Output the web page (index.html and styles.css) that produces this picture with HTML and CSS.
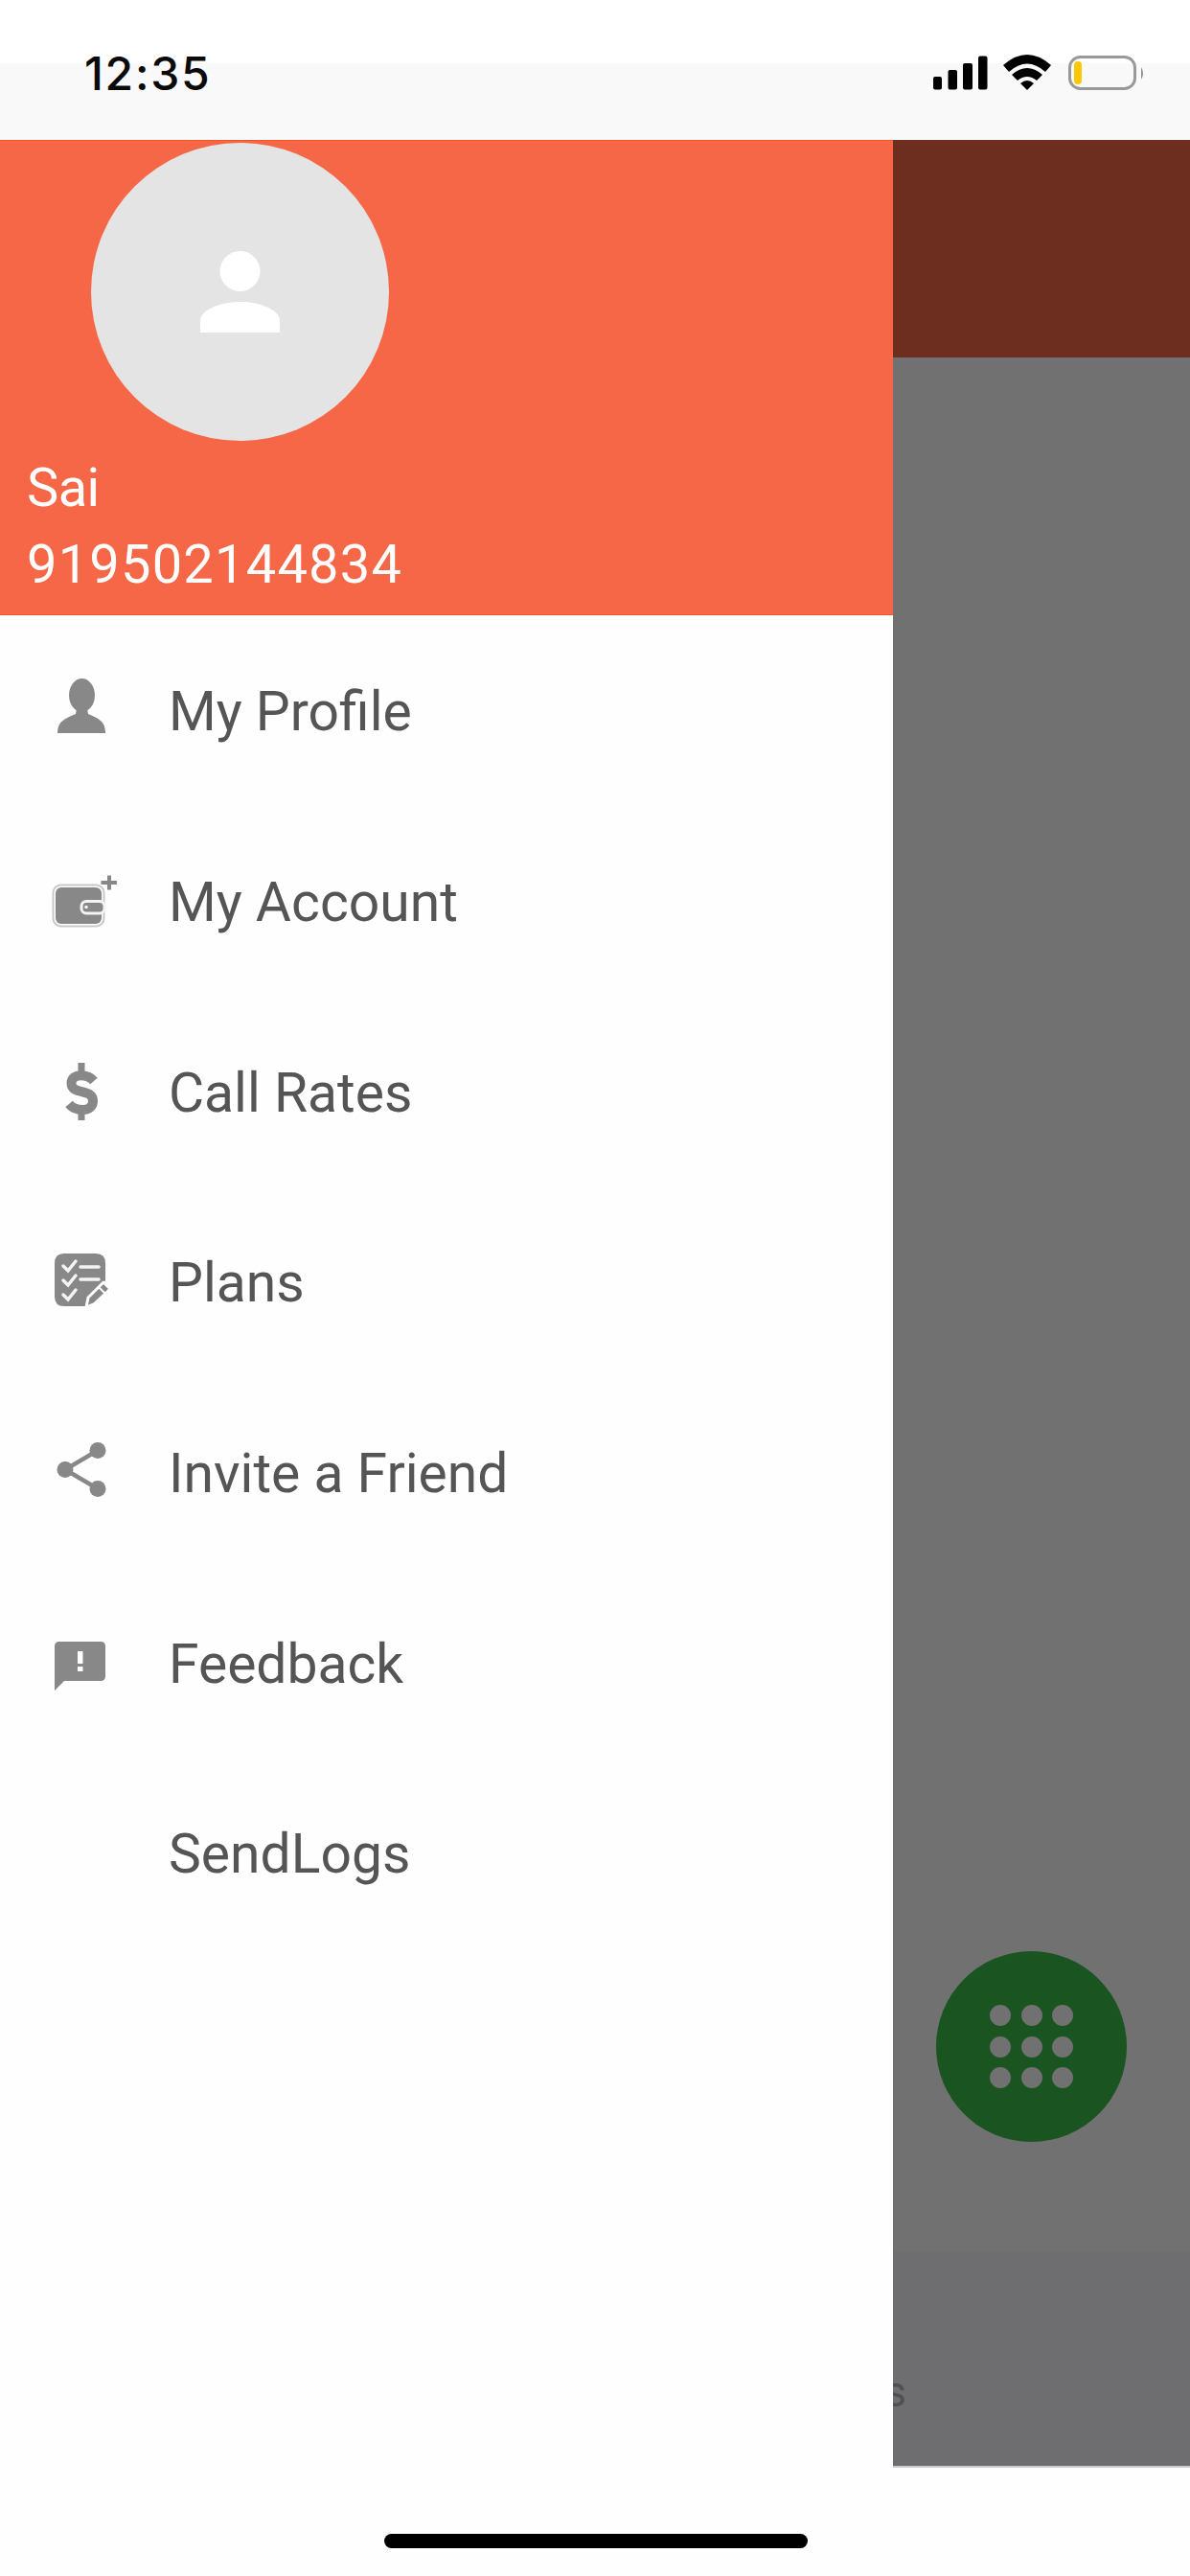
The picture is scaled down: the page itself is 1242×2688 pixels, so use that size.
FILE: index.html
```html
<!DOCTYPE html>
<html lang="en">
<head>
<meta charset="utf-8">
<title>Menu</title>
<link rel="stylesheet" href="styles.css">
</head>
<body>
<div class="phone">
  <header class="status">
    <span class="time">12:35</span>
    <svg class="status-icons" viewBox="960 50 240 50" width="240" height="50" aria-hidden="true">
      <rect x="974" y="80" width="9" height="13.5" rx="2"/>
      <rect x="989.5" y="73" width="9.5" height="20.5" rx="2"/>
      <rect x="1005" y="66" width="10" height="27.5" rx="2"/>
      <rect x="1021" y="58.5" width="9.5" height="35" rx="2"/>
      <path d="M1047 68 Q1072 46 1097 68 L1091 75 Q1072 58 1053 75 Z"/>
      <path d="M1056 78 Q1072 64 1088 78 L1082 84 Q1072 76 1062 84 Z"/>
      <path d="M1065 87 Q1072 81 1079 87 L1072 94 Z"/>
      <rect class="batt-case" x="1116.5" y="59.5" width="68" height="33" rx="11"/>
      <rect class="batt-level" x="1121" y="64" width="8" height="24" rx="4"/>
      <path class="batt-nub" d="M1191 70 Q1195 76.500 1191 83 Z"/>
    </svg>
  </header>

  <main class="body">
    <nav class="drawer">
      <section class="profile">
        <div class="avatar">
          <svg viewBox="0 0 311 311" width="311" height="311" aria-hidden="true">
            <circle cx="155.500" cy="134" r="21"/>
            <path d="M114 198 V185 C114 176 132 166 155.500 166 C179 166 197 176 197 185 V198 Z"/>
          </svg>
        </div>
        <div class="profile-line profile-name">Sai</div>
        <div class="profile-line profile-phone">919502144834</div>
      </section>
      <ul class="menu">
        <li class="item">
          <svg class="icon" viewBox="30 686 110 110" aria-hidden="true">
            <ellipse cx="85.500" cy="725.500" rx="13.500" ry="17.500"/>
            <path d="M60 765 C60 753 67 750 79 745 L80 739 L91 739 L92 745 C104 750 110 753 110 765 Z"/>
          </svg>
          <span class="label">My Profile</span>
        </li>
        <li class="item">
          <svg class="icon" viewBox="30 885 110 110" aria-hidden="true">
            <rect class="wallet-edge" x="55.500" y="923.500" width="53" height="43" rx="8"/>
            <rect x="58" y="926" width="48" height="38" rx="6"/>
            <rect class="wallet-clasp" x="85" y="940.500" width="24" height="12.500" rx="5"/>
            <circle class="wallet-dot" cx="90" cy="946.500" r="1.800"/>
            <path class="wallet-plus" d="M114 913.500 V928.500 M105.500 921 H122"/>
          </svg>
          <span class="label">My Account</span>
        </li>
        <li class="item">
          <svg class="icon" viewBox="30 1083 110 110" aria-hidden="true">
            <path class="dollar" d="M98 1127 C92 1120 75 1118 74.500 1129 C74 1142 97 1134 97 1148 C97 1160 79 1159 72 1151"/>
            <path class="dollar-bar" d="M85 1108 V1118 M85 1158 V1168"/>
          </svg>
          <span class="label">Call Rates</span>
        </li>
        <li class="item">
          <svg class="icon" viewBox="30 1282 110 110" aria-hidden="true">
            <path d="M67 1308 H100 Q110 1308 110 1318 V1336 L92 1363 H67 Q57 1363 57 1353 V1318 Q57 1308 67 1308 Z"/>
            <path class="plans-mark" d="M66 1321 L71 1326 L79 1316 M66 1336 L71 1341 L79 1331 M66 1351 L71 1356 L79 1346"/>
            <path class="plans-mark" d="M84 1322 H103 M84 1335 H103"/>
            <path class="plans-pencil" d="M108 1338 L115 1345 L98 1361 L90 1364 L92 1354 Z"/>
            <path class="plans-tip" d="M103 1343 L110 1350"/>
          </svg>
          <span class="label">Plans</span>
        </li>
        <li class="item">
          <svg class="icon" viewBox="30 1481 110 110" aria-hidden="true">
            <circle cx="102" cy="1513.500" r="8.500"/>
            <circle cx="68" cy="1533.500" r="8.500"/>
            <circle cx="102" cy="1553.500" r="8.500"/>
            <path class="share-line" d="M102 1513.500 L68 1533.500 L102 1553.500"/>
          </svg>
          <span class="label">Invite a Friend</span>
        </li>
        <li class="item">
          <svg class="icon" viewBox="30 1679 110 110" aria-hidden="true">
            <path d="M62 1712 H105 Q110 1712 110 1717 V1748 Q110 1753 105 1753 H67 L57 1763 V1717 Q57 1712 62 1712 Z"/>
            <rect class="feedback-mark" x="81" y="1722" width="5.500" height="13"/>
            <rect class="feedback-mark" x="81" y="1738" width="5.500" height="5"/>
          </svg>
          <span class="label">Feedback</span>
        </li>
        <li class="item">
          <span class="icon"></span>
          <span class="label">SendLogs</span>
        </li>
      </ul>
    </nav>

    <aside class="backdrop">
      <div class="backdrop-bar"></div>
      <div class="backdrop-list"></div>
      <div class="backdrop-tabs"><span class="clipped">s</span></div>
    </aside>
  </main>

  <button class="fab" type="button" aria-label="Dial pad">
    <span class="dots">
      <i></i><i></i><i></i><i></i><i></i><i></i><i></i><i></i><i></i>
    </span>
  </button>
  <div class="home-indicator"></div>
</div>
</body>
</html>
```

FILE: styles.css
```css
* { box-sizing: border-box; }

html, body {
  margin: 0;
  padding: 0;
  background: #fefefe;
}

.phone {
  position: relative;
  width: 1242px;
  height: 2688px;
  display: flex;
  flex-direction: column;
  overflow: hidden;
  font-family: Roboto, "Liberation Sans", sans-serif;
  background: #fefefe;
}

/* status bar */
.status {
  flex: none;
  height: 146px;
  padding: 52px 0 0 88px;
  display: flex;
  justify-content: space-between;
  align-items: flex-start;
  background: linear-gradient(#ffffff 66px, #f9f9f9 66px);
}

.time {
  font-family: Inter, Roboto, sans-serif;
  font-size: 48px;
  font-weight: 500;
  line-height: 50px;
  letter-spacing: 1.7px;
  color: #0a0a0a;
}

.status-icons {
  margin: -2px 42px 0 0;
  fill: #000;
}

.batt-case { fill: none; stroke: #999; stroke-width: 3; }
.batt-level { fill: #fdc800; }
.batt-nub { fill: #8e8e8e; }

/* layout */
.body {
  flex: 1;
  display: flex;
  align-items: flex-start;
}

.drawer {
  flex: none;
  width: 932px;
}

/* profile header */
.profile {
  height: 496px;
  padding: 2px 0 0 28px;
  color: #fff;
  background: #f66747;
  border-top: 1px solid #f9541f;
  border-bottom: 1px solid #f9541f;
}

.avatar {
  width: 311px;
  height: 311px;
  margin: 0 0 9px 67px;
  border-radius: 50%;
  background: #e4e4e4;
}

.avatar svg { display: block; fill: #fff; }

.profile-line {
  font-size: 56px;
  line-height: 80px;
}

.profile-name { letter-spacing: -0.6px; }
.profile-phone { letter-spacing: 1.2px; }

/* menu */
.menu {
  margin: 0;
  padding: 0;
  list-style: none;
}

.item {
  height: 198.67px;
  padding-left: 30px;
  display: flex;
  align-items: center;
  gap: 36px;
}

.icon {
  flex: none;
  width: 110px;
  height: 110px;
  fill: #888;
}

.label {
  margin-top: 3px;
  font-size: 57px;
  color: #555;
}

.wallet-edge { fill: none; stroke: #c8c8c8; stroke-width: 2; }
.wallet-clasp { stroke: #f4f4f4; stroke-width: 3; }
.wallet-dot { fill: #f4f4f4; }
.wallet-plus { fill: none; stroke: #888; stroke-width: 4; }

.dollar { fill: none; stroke: #888; stroke-width: 10; }
.dollar-bar { fill: none; stroke: #888; stroke-width: 7; }

.plans-mark { fill: none; stroke: #f4f4f4; stroke-width: 3.5; stroke-linecap: round; }
.plans-pencil { fill: #888; stroke: #fefefe; stroke-width: 3; stroke-linejoin: round; }
.plans-tip { fill: none; stroke: #fefefe; stroke-width: 2; }

.share-line { fill: none; stroke: #888; stroke-width: 4.5; }
.feedback-mark { fill: #fefefe; }

/* dimmed page behind the drawer */
.backdrop {
  flex: 1;
  height: 2429px;
  display: flex;
  flex-direction: column;
  border-bottom: 2px solid #c9c9c9;
}

.backdrop-bar {
  flex: none;
  height: 227px;
  background: #6d2e20;
}

.backdrop-list {
  flex: 1;
  background: #717171;
}

.backdrop-tabs {
  flex: none;
  height: 223px;
  position: relative;
  background: #6e6e70;
}

.clipped {
  position: absolute;
  left: 0;
  bottom: 54px;
  width: 14px;
  overflow: hidden;
  display: flex;
  justify-content: flex-end;
  font-size: 44px;
  line-height: 46px;
  color: #505052;
}

/* floating dial button */
.fab {
  position: absolute;
  left: 977px;
  top: 2036px;
  width: 199px;
  height: 199px;
  padding: 0;
  border: 0;
  border-radius: 50%;
  display: flex;
  align-items: center;
  justify-content: center;
  background: #1a5421;
}

.dots {
  display: grid;
  grid-template-columns: repeat(3, 22px);
  gap: 10.5px;
}

.dots i {
  display: block;
  width: 22px;
  height: 22px;
  border-radius: 50%;
  background: #717171;
}

.home-indicator {
  position: absolute;
  left: 401px;
  top: 2644px;
  width: 442px;
  height: 15px;
  border-radius: 8px;
  background: #000;
}
```
